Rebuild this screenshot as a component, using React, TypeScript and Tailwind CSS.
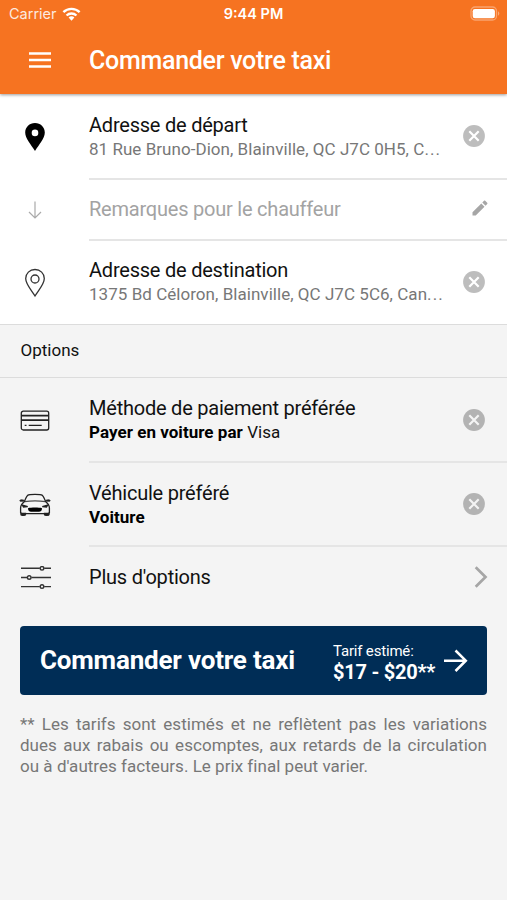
import type { ReactNode } from "react";
import clsx from "clsx";

const WifiIcon = () => (
  <svg className="h-[14px] w-[19px]" viewBox="0 0 20 15" fill="#fff">
    <path d="M10 14.6 6.900 11.300a4.300 4.300 0 0 1 6.200 0Z" />
    <g fill="none" stroke="#fff" strokeWidth="2.500">
      <path d="M4.700 9.100a7.600 7.600 0 0 1 10.600 0" />
      <path d="M1.300 5.500a12.400 12.400 0 0 1 17.400 0" />
    </g>
  </svg>
);

const BatteryIcon = () => (
  <svg className="h-[15px] w-[31px]" viewBox="0 0 31 15" fill="none">
    <rect x="1" y="1" width="25.500" height="13" rx="4" stroke="#fff" strokeOpacity=".35" strokeWidth="1.300" />
    <rect x="2.700" y="3" width="22.200" height="9.200" rx="2.200" fill="#fff" />
    <path d="M28 5.300c1.800.8 1.800 3.600 0 4.400Z" fill="#fff" fillOpacity=".4" />
  </svg>
);

const MenuIcon = () => (
  <svg className="h-4 w-[22px]" viewBox="0 0 22 16" stroke="#fff" strokeWidth="2.400">
    <path d="M0 1.500h22M0 8h22M0 14.500h22" />
  </svg>
);

const PinIcon = ({ filled }: { filled?: boolean }) => (
  <svg className="h-[30px] w-[22px]" viewBox="0 0 22 30" fill="none">
    {filled ? (
      <path
        fill="#000"
        fillRule="evenodd"
        d="M11 1C5.500 1 1.200 5.200 1.200 10.500 1.200 16.500 7 22.500 11 29c4-6.500 9.800-12.500 9.800-18.500C20.800 5.200 16.500 1 11 1Zm0 6.600a3.300 3.300 0 1 1 0 6.600 3.300 3.300 0 0 1 0-6.600Z"
      />
    ) : (
      <g stroke="#333" strokeWidth="1.300">
        <path d="M11 1.500c-5.300 0-9.300 4-9.300 9.100C1.700 16.300 7.300 22 11 28c3.700-6 9.300-11.700 9.300-17.400 0-5.100-4-9.100-9.300-9.100Z" />
        <circle cx="11" cy="11" r="4" />
      </g>
    )}
  </svg>
);

const DownIcon = () => (
  <svg className="mb-1 h-5 w-[14px]" viewBox="0 0 14 20" fill="none" stroke="#aaa" strokeWidth="1.200">
    <path d="M7 2.500V19M1 13l6 6 6-6" />
  </svg>
);

const CardIcon = () => (
  <svg className="h-[22px] w-[30px]" viewBox="0 0 30 22" fill="none" stroke="#222" strokeWidth="1.300">
    <rect x="1.300" y="1.200" width="27.400" height="18.800" rx="2" />
    <path d="M1.300 5.700h27.400M1.300 10.200h27.400" strokeWidth="1.700" />
    <path d="M4.700 15.300h1.800M8.700 15.300h13" />
  </svg>
);

const CarIcon = () => (
  <svg className="h-6 w-[32px]" viewBox="0 0 32 24" fill="none" stroke="#222" strokeWidth="1.300">
    <path d="M5.200 9C6.300 6 7.300 3.600 8.600 2.400 10.500 1.100 21.500 1.100 23.400 2.400c1.300 1.200 2.300 3.600 3.400 6.600" />
    <path d="M5.500 8.700c5-.7 16-.7 21 0" strokeOpacity=".8" />
    <path d="M5.200 9C2.600 10.700 1.600 12.200 1.600 15v4.700l1.200.9h26.400l1.200-.9V15c0-2.800-1-4.300-3.600-6" />
    <path d="M4.800 8.200H1.200c-.6 0-.4-1 .6-1.400l3 .3ZM27.200 8.200h3.600c.6 0 .4-1-.6-1.400l-3 .3Z" fill="#222" strokeWidth=".8" />
    <path d="m3.500 12.200 5.200 1.500-4.200.3ZM28.500 12.200l-5.200 1.500 4.200.3Z" fill="#222" />
    <path d="M9 15.200c3-.8 11-.8 14 0 0 2.800-1.500 3.500-3 3.500h-8c-1.500 0-3-.7-3-3.500Z" fill="#000" stroke="none" />
    <path d="M2 20.300h4.500v1.400c0 .9-4.500.9-4.500 0ZM25.500 20.300H30v1.400c0 .9-4.500.9-4.500 0Z" fill="#222" />
  </svg>
);

const SlidersIcon = () => (
  <svg className="ml-px h-[24px] w-[30px]" viewBox="0 0 30 24" fill="none" stroke="#333" strokeWidth="1.400">
    <path d="M0 2.300h18.800M23.200 2.300H30M0 11.500h6M10.400 11.500H30M0 20.600h18.800M23.200 20.600H30" />
    <circle cx="21" cy="2.300" r="1.800" />
    <circle cx="8.200" cy="11.500" r="1.800" />
    <circle cx="21" cy="20.600" r="1.800" />
  </svg>
);

const ClearIcon = ({ muted }: { muted?: boolean }) => (
  <svg className="h-[22px] w-[22px]" viewBox="0 0 22 22">
    <circle cx="11" cy="11" r="10.900" fill={muted ? "#b3b3b3" : "#bdbdbd"} />
    <path d="m6.300 6.300 9.400 9.400m0-9.400-9.400 9.400" stroke={muted ? "#f4f4f4" : "#fff"} strokeWidth="2.200" />
  </svg>
);

const PencilIcon = () => (
  <svg className="-mr-[3px] mb-1 h-4 w-4" viewBox="0 0 16 16" fill="#a6a6a6">
    <path d="M.5 12.300v3.200h3.200L12.500 6.700 9.300 3.500ZM15.200 4c.4-.4.4-.9 0-1.200l-2-2c-.3-.4-.8-.4-1.200 0l-1.700 1.700 3.200 3.200Z" />
  </svg>
);

const ChevronIcon = () => (
  <svg className="-mr-[3px] h-[22px] w-[14px]" viewBox="0 0 14 22" fill="none" stroke="#a6a6a6" strokeWidth="2.700">
    <path d="m1.700 1.300 9.800 9.700-9.800 9.700" />
  </svg>
);

const ArrowIcon = () => (
  <svg className="h-6 w-6" viewBox="0 0 24 24" fill="none" stroke="#fff" strokeWidth="2.500">
    <path d="M0 11.700h21.500M11.500 1.500l10.300 10.200L11.500 22" />
  </svg>
);

type RowProps = {
  icon: ReactNode;
  action: ReactNode;
  children: ReactNode;
  className?: string;
  divider?: boolean;
};

const Row = ({ icon, action, children, className, divider = true }: RowProps) => (
  <div className={clsx("flex", className)}>
    <div className="flex w-[70px] shrink-0 items-center justify-center">{icon}</div>
    <div
      className={clsx(
        "ml-[19px] flex min-w-0 flex-1 items-center justify-between border-b-2 pr-[22px]",
        divider ? "border-[#e5e5e5]" : "border-transparent",
      )}
    >
      <div className="whitespace-nowrap leading-6">{children}</div>
      {action}
    </div>
  </div>
);

const label = "text-[20px] tracking-[-0.22px]";
const detail = "text-[17px] tracking-[0.04px]";

const Address = ({ text }: { text: string }) => (
  <p className={clsx(detail, "text-[#777]")}>
    {text}
    <span className="tracking-[1.1px]">...</span>
  </p>
);

export default function App() {
  return (
    <div className="flex h-[900px] w-[507px] flex-col overflow-hidden bg-[#f4f4f4] font-['Roboto',sans-serif] text-[#111]">
      <header className="z-10 h-[94px] shrink-0 bg-[#f67321] text-white shadow-[0_1px_3px_rgba(0,0,0,0.4)]">
        <div className="grid h-[27px] grid-cols-3 items-center pr-[6px] pl-[9px] font-['Inter',sans-serif] text-[15px]">
          <div className="flex items-center gap-[5px]">
            <span className="pt-px text-[14.5px] opacity-85">Carrier</span>
            <WifiIcon />
          </div>
          <span className="pt-px pr-[3px] text-center text-[14.5px] font-semibold">9:44 PM</span>
          <div className="flex justify-end">
            <BatteryIcon />
          </div>
        </div>
        <div className="flex h-[66px] items-center pl-[29px]">
          <MenuIcon />
          <h1 className="ml-[38px] pt-px text-[25px] font-medium tracking-[-0.28px]">Commander votre taxi</h1>
        </div>
      </header>

      <section className="border-b border-[#dcdcdc] bg-white">
        <Row className="h-[86px]" icon={<PinIcon filled />} action={<ClearIcon />}>
          <p className={clsx(label, "pt-[2px]")}>Adresse de départ</p>
          <Address text="81 Rue Bruno-Dion, Blainville, QC J7C 0H5, C" />
        </Row>
        <Row className="h-[61px]" icon={<DownIcon />} action={<PencilIcon />}>
          <p className={clsx(label, "pb-[2px] text-[#a3a3a3]")}>Remarques pour le chauffeur</p>
        </Row>
        <Row className="h-[83px]" icon={<PinIcon />} action={<ClearIcon />} divider={false}>
          <p className={clsx(label, "pt-px")}>Adresse de destination</p>
          <Address text="1375 Bd Céloron, Blainville, QC J7C 5C6, Can" />
        </Row>
      </section>

      <h2 className="flex h-[53px] items-center border-b border-[#dcdcdc] pl-[20.5px] text-[17px]">Options</h2>

      <section>
        <Row className="h-[85px]" icon={<CardIcon />} action={<ClearIcon muted />}>
          <p className={label}>Méthode de paiement préférée</p>
          <p className={detail}>
            <b className="font-bold text-black">Payer en voiture par</b> Visa
          </p>
        </Row>
        <Row className="h-[84px]" icon={<CarIcon />} action={<ClearIcon muted />}>
          <p className={clsx(label, "pt-px")}>Véhicule préféré</p>
          <p className={clsx(detail, "font-bold text-black")}>Voiture</p>
        </Row>
        <Row className="h-[62px]" icon={<SlidersIcon />} action={<ChevronIcon />} divider={false}>
          <p className={label}>Plus d'options</p>
        </Row>
      </section>

      <button className="mx-[20px] mt-[17px] flex h-[69px] shrink-0 items-center rounded-[4px] bg-[#002d56] pl-5 text-left text-white">
        <span className="w-[293px] text-[26px] font-bold tracking-[-0.2px]">Commander votre taxi</span>
        <span className="w-[111px] pt-[3px] whitespace-nowrap">
          <span className="block text-[15px] leading-[20px] tracking-[-0.18px]">Tarif estimé:</span>
          <span className="block text-[20px] leading-[23px] font-bold tracking-[-0.25px]">$17 - $20**</span>
        </span>
        <ArrowIcon />
      </button>

      <p className="mx-[20px] mt-[19px] text-justify text-[17px] leading-[21px] tracking-[0.03px] text-[#777]">
        ** Les tarifs sont estimés et ne reflètent pas les variations dues aux rabais ou escomptes, aux retards de la
        circulation ou à d'autres facteurs. Le prix final peut varier.
      </p>
    </div>
  );
}
